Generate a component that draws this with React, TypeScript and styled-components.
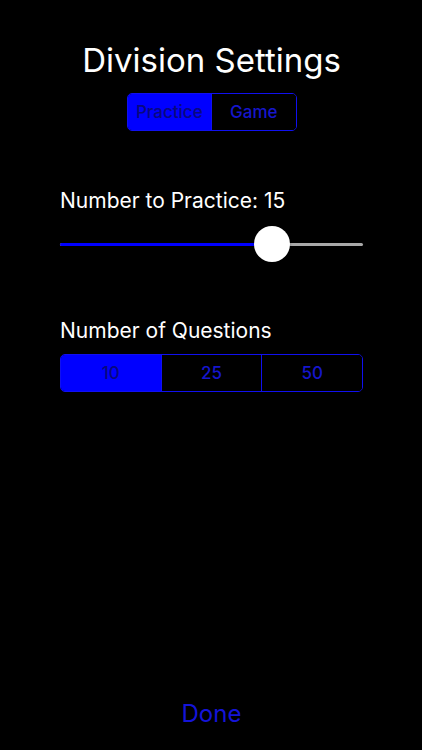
import React, { useState } from "react";
import styled, { createGlobalStyle } from "styled-components";

const Global = createGlobalStyle`
  html, body { margin: 0; padding: 0; background: #000; }
  body { font-family: Inter, "Liberation Sans", sans-serif; }
  #root { min-height: 100vh; }
`;

const Page = styled.div`
  box-sizing: border-box;
  height: 750px;
  background: #000;
  display: flex;
  flex-direction: column;
  padding: 40px 59px 21px 60px;
`;

const Title = styled.h1`
  margin: 0;
  font-weight: 400;
  font-size: 33px;
  line-height: 40px;
  color: #fff;
  text-align: center;
`;

const Segmented = styled.div<{ $width: number; $height: number }>`
  display: flex;
  box-sizing: border-box;
  width: ${(p) => p.$width}px;
  height: ${(p) => p.$height}px;
  border: 1.5px solid #1010f0;
  border-radius: 5px;
  overflow: hidden;
`;

const Segment = styled.button<{ $active: boolean }>`
  flex: 1;
  border: none;
  margin: 0;
  padding: 0;
  font-family: Inter, "Liberation Sans", sans-serif;
  font-size: 17px;
  font-weight: 500;
  background: ${(p) => (p.$active ? "#0000ff" : "#000")};
  color: ${(p) => (p.$active ? "#08087e" : "#1616cc")};
  & + & {
    border-left: 1.5px solid #1010f0;
  }
`;

const TopSeg = styled.div`
  display: flex;
  justify-content: center;
  margin-top: 13px;
`;

const Label = styled.div<{ $top: number }>`
  margin-top: ${(p) => p.$top}px;
  font-size: 21px;
  line-height: 24px;
  color: #fff;
`;

const SliderWrap = styled.div`
  position: relative;
  height: 38px;
  margin-top: 12px;
  display: flex;
  align-items: center;
`;

const Track = styled.div`
  flex: 1;
  height: 3px;
  border-radius: 2px;
  background: #a8a8a8;
  position: relative;
`;

const Fill = styled.div`
  position: absolute;
  left: 0;
  top: 0;
  bottom: 0;
  background: #0000ff;
  border-radius: 2px;
`;

const Thumb = styled.div`
  position: absolute;
  top: 50%;
  width: 36px;
  height: 36px;
  margin-top: -18px;
  margin-left: -18px;
  border-radius: 50%;
  background: #fff;
  box-shadow: 0 1px 3px rgba(0, 0, 0, 0.3);
`;

const QSeg = styled.div`
  margin-top: 11px;
`;

const Spacer = styled.div`
  flex: 1;
`;

const Done = styled.button`
  align-self: center;
  background: none;
  border: none;
  font-family: Inter, "Liberation Sans", sans-serif;
  font-size: 24px;
  line-height: 30px;
  color: #1414d8;
  padding: 0;
`;

export default function App() {
  const [mode, setMode] = useState(0);
  const [q, setQ] = useState(0);
  const pct = (271 - 60) / (362 - 60);
  return (
    <>
      <Global />
      <Page>
        <Title>Division Settings</Title>
        <TopSeg>
          <Segmented $width={170} $height={38}>
            {["Practice", "Game"].map((t, i) => (
              <Segment key={t} $active={mode === i} onClick={() => setMode(i)}>
                {t}
              </Segment>
            ))}
          </Segmented>
        </TopSeg>
        <Label $top={58}>Number to Practice: 15</Label>
        <SliderWrap>
          <Track>
            <Fill style={{ width: `${pct * 100}%` }} />
            <Thumb style={{ left: `${pct * 100}%` }} />
          </Track>
        </SliderWrap>
        <Label $top={56}>Number of Questions</Label>
        <QSeg>
          <Segmented $width={303} $height={38}>
            {["10", "25", "50"].map((t, i) => (
              <Segment key={t} $active={q === i} onClick={() => setQ(i)}>
                {t}
              </Segment>
            ))}
          </Segmented>
        </QSeg>
        <Spacer />
        <Done>Done</Done>
      </Page>
    </>
  );
}
